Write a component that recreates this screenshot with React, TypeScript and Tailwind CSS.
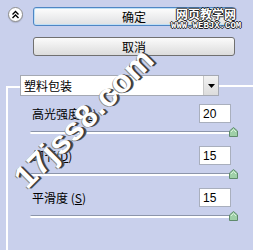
import React from "react";

const Thumb = () => (
    <svg width="9" height="10" viewBox="0 0 9 10" className="absolute right-[-5px] top-[4px]">
        <path d="M4.5 0.5 L8.5 4 L8.5 9.5 L0.5 9.5 L0.5 4 Z" fill="#9fd0a8" stroke="#5f8a6c" strokeWidth="1" />
        <path d="M2 5 L4.5 2.5 L7 5" fill="none" stroke="#d8f0dc" strokeWidth="1" />
    </svg>
);

const SliderRow = ({ label, hotkey, value }: { label: string; hotkey: string; value: string }) => (
    <div>
        <div className="flex h-[19px] items-center justify-between">
            <span className="leading-none">
                {label}(<u>{hotkey}</u>)
            </span>
            <div className="flex h-[19px] w-[32px] items-center border border-[#a9afbd] bg-white pl-[3px] font-['Liberation_Sans',sans-serif] text-[12px] leading-none">
                {value}
            </div>
        </div>
        <div className="relative -mx-[2px] h-[23px] pt-[8px]">
            <div className="h-[3px] rounded-l-full border-t border-[#8c95ab] bg-white" />
            <Thumb />
        </div>
    </div>
);

export default function App() {
    return (
        <div className="relative h-[250px] w-[253px] overflow-hidden bg-[#c9d0ec] font-['Noto_Sans_CJK_SC',sans-serif] text-[12px] text-black">
            {/* top buttons */}
            <div className="flex pl-[8px] pt-[7px]">
                <div className="flex h-[15px] w-[15px] items-center justify-center rounded-full border border-[#8d8d8d] bg-white shadow-[0_1px_1px_rgba(0,0,0,0.15)]">
                    <svg width="9" height="9" viewBox="0 0 9 9">
                        <path d="M1.5 4.5 L4.5 1.5 L7.5 4.5" fill="none" stroke="#000" strokeWidth="1.4" />
                        <path d="M1.5 8 L4.5 5 L7.5 8" fill="none" stroke="#000" strokeWidth="1.4" />
                    </svg>
                </div>
                <div className="ml-[10px] flex w-[202px] flex-col gap-[11px]">
                    <button className="flex h-[19px] items-center justify-center rounded-[3px] border border-[#4f86c4] bg-gradient-to-b from-[#fdfdfd] to-[#dfe0e2] leading-none shadow-[inset_0_0_0_1px_#bfe0f6]">
                        确定
                    </button>
                    <button className="flex h-[19px] items-center justify-center rounded-[3px] border border-[#707070] bg-gradient-to-b from-[#fbfbfb] to-[#dcdcdc] leading-none">
                        取消
                    </button>
                </div>
            </div>

            {/* group */}
            <div className="mt-[19px] pl-[6px]">
                <div className="flex h-[21px]">
                    <div className="h-[10px] w-[14px] self-end border-l-2 border-t-2 border-white" />
                    <div className="flex w-[199px] border border-[#a5a9b3] bg-white">
                        <div className="flex flex-1 items-center pl-[3px] leading-none">塑料包装</div>
                        <div className="flex w-[15px] items-center justify-center border-l border-[#c8c8c8] bg-gradient-to-b from-[#f2f2f2] to-[#dcdcdc]">
                            <svg width="7" height="4" viewBox="0 0 7 4">
                                <path d="M0 0 L7 0 L3.5 4 Z" fill="#000" />
                            </svg>
                        </div>
                    </div>
                    <div className="mt-[10px] h-[2px] flex-1 bg-white" />
                </div>
                <div className="h-[160px] border-l-2 border-white pl-[24px] pr-[22px] pt-[8px]">
                    <SliderRow label="高光强度" hotkey="H" value="20" />
                    <SliderRow label="细节" hotkey="D" value="15" />
                    <SliderRow label="平滑度 " hotkey="S" value="15" />
                </div>
            </div>

            {/* watermarks */}
            <div className="absolute left-[176px] top-[8px] text-[12px] font-bold leading-none text-white [text-shadow:1px_0_0_#222,-1px_0_0_#222,0_1px_0_#222,0_-1px_0_#222]">
                网页教学网
            </div>
            <div className="absolute left-[171px] top-[22px] font-['Liberation_Mono',monospace] text-[9px] font-bold leading-none text-white [text-shadow:1px_0_0_#222,-1px_0_0_#222,0_1px_0_#222,0_-1px_0_#222]">
                WWW.WEBJX.COM
            </div>
            <div className="absolute left-[84px] top-[118px] -translate-x-1/2 -translate-y-1/2 rotate-[-45deg] whitespace-nowrap font-['Liberation_Sans',sans-serif] text-[32px] font-bold leading-none tracking-[1px] text-white [text-shadow:1px_1px_0_#333,2px_2px_0_#555,-1px_0_0_#888]">
                17jss8.com
            </div>
        </div>
    );
}
